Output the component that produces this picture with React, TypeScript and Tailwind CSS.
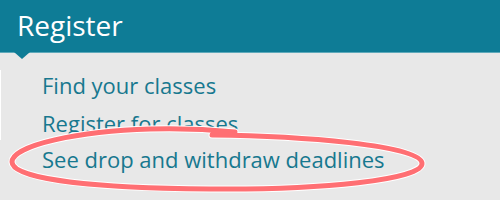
import React from "react";

export default function App() {
  return (
    <div className="relative w-[500px] h-[200px] overflow-hidden bg-[#e8e8e8]" style={{ fontFamily: '"Open Sans", sans-serif' }}>
      <div className="relative h-[53px] bg-[#0e7c96] border-b border-[#5ea9ba]">
        <div className="pl-[17px] pt-[6px] text-[28px] leading-[38px] text-white">Register</div>
        <svg className="absolute left-[14px] top-[52px]" width="16" height="7" viewBox="0 0 16 7">
          <polygon points="0,0 16,0 8,7" fill="#0e7c96" />
        </svg>
      </div>
      <div className="flex flex-col pt-[13px]">
        <div className="border-l border-white h-[70px] mt-[4px]">
          <div className="pl-[41px] -mt-[4px] text-[22px] leading-[38px] text-[#17788f]">Find your classes</div>
          <div className="pl-[41px] text-[22px] leading-[38px] text-[#17788f]">Register for classes</div>
        </div>
        <div className="pl-[42px] text-[22px] leading-[38px] text-[#17788f]">See drop and withdraw deadlines</div>
      </div>
      <svg className="absolute left-0 top-0 pointer-events-none" width="500" height="200" viewBox="0 0 500 200">
        <path d="M 212 135 C 300 136, 420 145, 422 163 C 424 180, 320 190, 210 189 C 100 188, 12 180, 12 162 C 12 145, 80 131, 150 129 C 185 128, 215 130, 235 132" fill="none" stroke="#ffffff" strokeWidth="7" strokeLinecap="round" />
        <path d="M 212 135 C 300 136, 420 145, 422 163 C 424 180, 320 190, 210 189 C 100 188, 12 180, 12 162 C 12 145, 80 131, 150 129 C 185 128, 215 130, 235 132" fill="none" stroke="#ff6f73" strokeWidth="5" strokeLinecap="round" />
      </svg>
    </div>
  );
}
